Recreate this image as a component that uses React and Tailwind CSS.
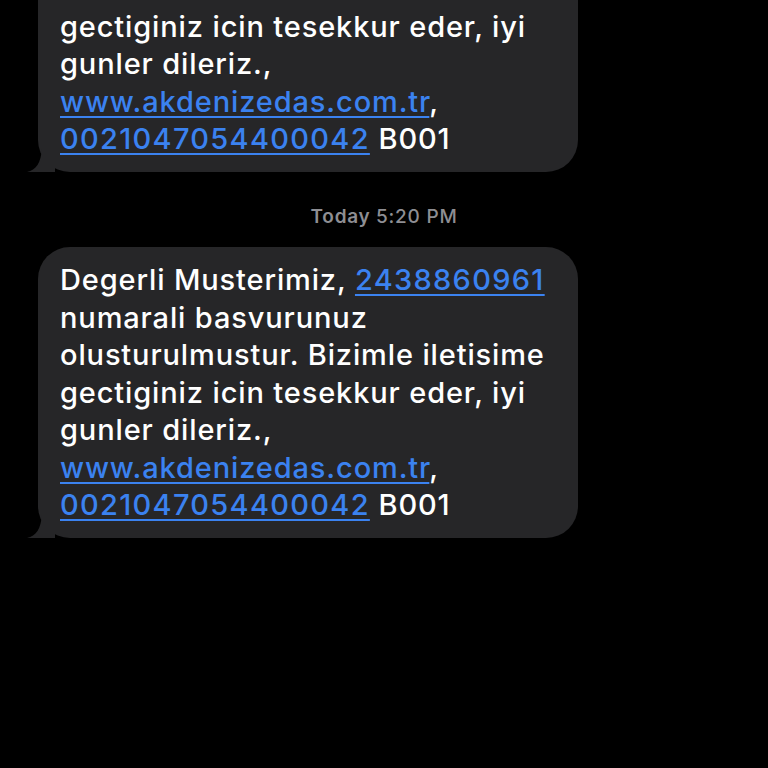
function Tail() {
  return (
    <svg
      className="absolute -left-[11px] bottom-0"
      width="28"
      height="24"
      viewBox="0 0 28 24"
    >
      <path d="M28 0 L28 24 L0 24 C9 22 14 15 15 0 Z" fill="#262628" />
    </svg>
  )
}

function Link({ children, digits }) {
  return (
    <span
      className={
        digits
          ? 'text-[#3b82f0] underline decoration-2 underline-offset-[4px] tracking-[0.045em]'
          : 'text-[#3b82f0] underline decoration-2 underline-offset-[4px]'
      }
    >
      {children}
    </span>
  )
}

function Bubble() {
  return (
    <div className="relative w-[540px] rounded-[32px] bg-[#262628] px-[22px] pt-[14px] pb-[14px] text-[29px] font-medium leading-[37.5px] tracking-[0.03em] text-white">
      Degerli Musterimiz, <Link digits>2438860961</Link>
      <br />
      numarali basvurunuz
      <br />
      olusturulmustur. Bizimle iletisime
      <br />
      gectiginiz icin tesekkur eder, iyi
      <br />
      gunler dileriz.,
      <br />
      <Link>www.akdenizedas.com.tr</Link>,
      <br />
      <Link digits>0021047054400042</Link> B001
      <Tail />
    </div>
  )
}

export default function App() {
  return (
    <div
      className="h-[768px] w-[768px] overflow-hidden bg-black"
      style={{ fontFamily: 'Inter, "Noto Sans", sans-serif' }}
    >
      <div className="-mt-[119px] flex flex-col">
        <div className="pl-[38px]">
          <Bubble />
        </div>
        <div className="mt-[31px] mb-[16px] text-center text-[19px] font-semibold tracking-[0.04em] text-[#8e8e93]">
          Today <span className="font-medium">5:20 PM</span>
        </div>
        <div className="pl-[38px]">
          <Bubble />
        </div>
      </div>
    </div>
  )
}
